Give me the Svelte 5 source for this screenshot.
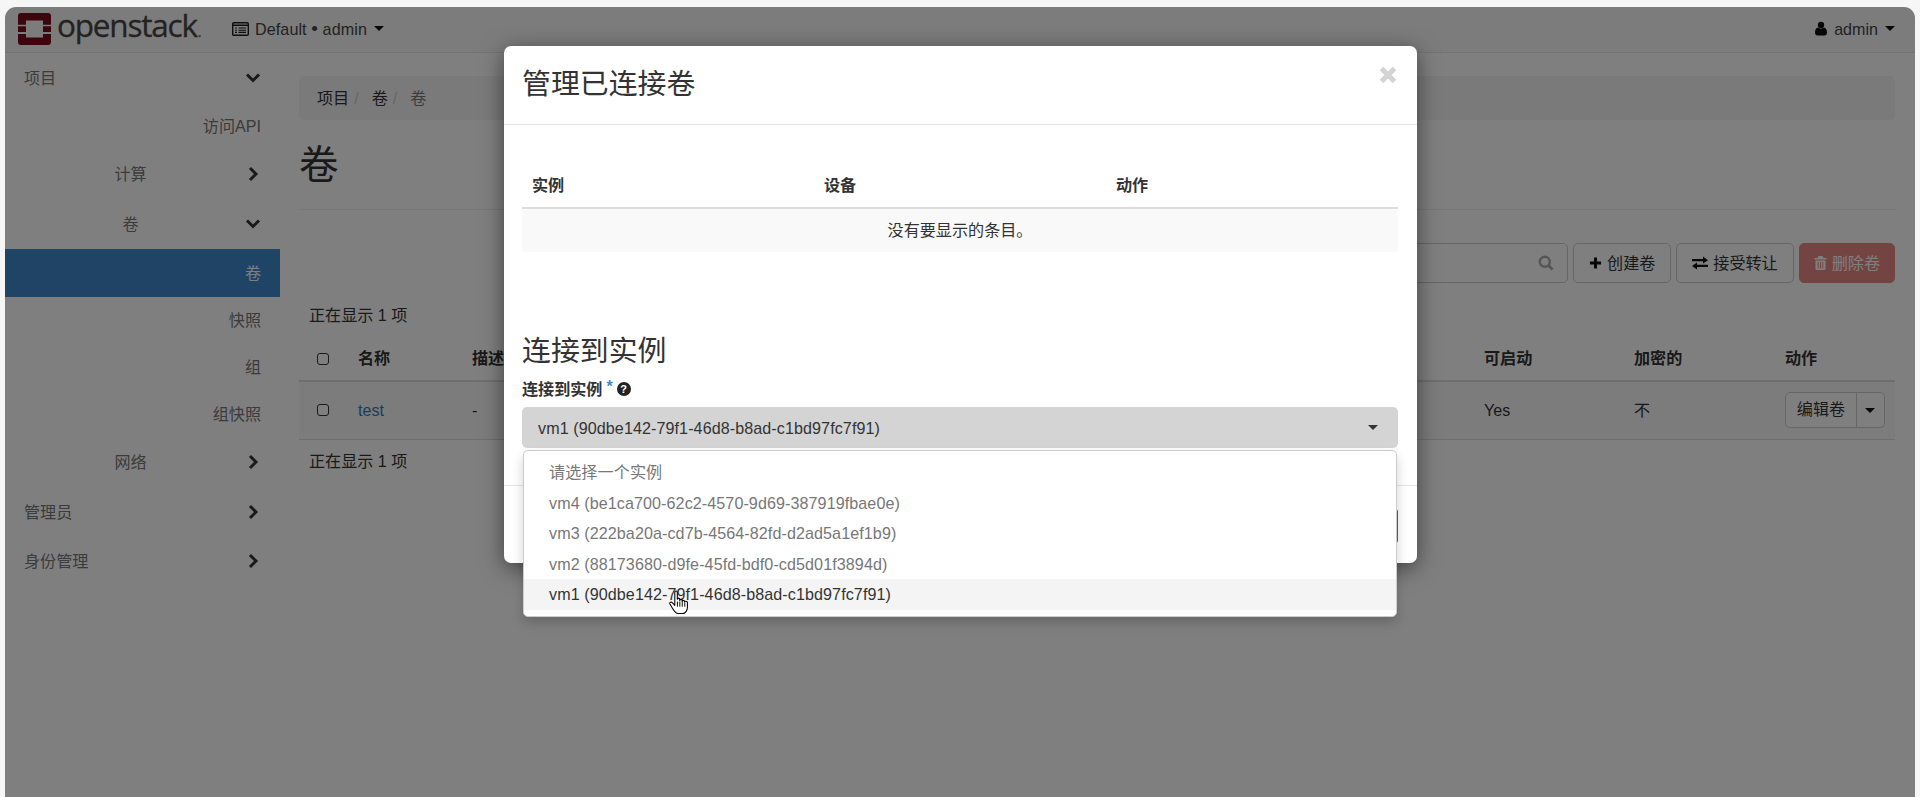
<script>
  const nav = [
    { label: '项目', kind: 'top', align: 'left', chevron: 'down' },
    { label: '访问API', kind: 'sub', align: 'right' },
    { label: '计算', kind: 'top', align: 'center', chevron: 'right' },
    { label: '卷', kind: 'top', align: 'center', chevron: 'down' },
    { label: '卷', kind: 'active', align: 'right' },
    { label: '快照', kind: 'sub', align: 'right' },
    { label: '组', kind: 'sub', align: 'right' },
    { label: '组快照', kind: 'sub', align: 'right' },
    { label: '网络', kind: 'top', align: 'center', chevron: 'right' },
    { label: '管理员', kind: 'top', align: 'left', chevron: 'right' },
    { label: '身份管理', kind: 'top', align: 'left', chevron: 'right' }
  ];
  const heads = ['名称', '描述', '大小', '状态', '组', '类型', '连接到', '可用域', '可启动', '加密的', '动作'];
  const options = [
    '请选择一个实例',
    'vm4 (be1ca700-62c2-4570-9d69-387919fbae0e)',
    'vm3 (222ba20a-cd7b-4564-82fd-d2ad5a1ef1b9)',
    'vm2 (88173680-d9fe-45fd-bdf0-cd5d01f3894d)',
    'vm1 (90dbe142-79f1-46d8-b8ad-c1bd97fc7f91)'
  ];
</script>

<div class="window">
  <header class="navbar">
    <div class="brand">
      <svg class="logo" viewBox="0 0 33 32" aria-hidden="true">
        <path fill="#7a0a1a" d="M3 0h27a3 3 0 0 1 3 3v8.700h-8V7.500H8v4.200H0V3a3 3 0 0 1 3-3zM0 13.300h8V19H0zM25 13.300h8V19h-8zM0 21h8v3.500h17V21h8v8a3 3 0 0 1-3 3H3a3 3 0 0 1-3-3z" />
      </svg>
      <span class="wordmark">openstack<i>.</i></span>
    </div>
    <div class="project">
      <svg class="ico-list" viewBox="0 0 17 14" aria-hidden="true">
        <rect x="0.7" y="0.7" width="15.6" height="12.6" rx="1.2" fill="none" stroke="#1d1d1d" stroke-width="1.4" />
        <path d="M1 3.2h15" stroke="#1d1d1d" stroke-width="1.6" />
        <path d="M3 6h2M3 8.2h2M3 10.4h2M6.500 6h7.500M6.500 8.200h7.500M6.500 10.400h7.500" stroke="#1d1d1d" stroke-width="1.1" />
      </svg>
      <span>Default <b>•</b> admin</span>
      <span class="caret"></span>
    </div>
    <div class="user">
      <svg class="ico-user" viewBox="0 0 12 14" aria-hidden="true">
        <circle cx="6" cy="3.4" r="3.2" fill="#111" />
        <path fill="#111" d="M0 11c0-3 1.2-4.600 3-4.900 1.800 1.200 4.200 1.200 6 0 1.800.3 3 1.900 3 4.900 0 1.900-1 3-2.500 3h-7C1 14 0 12.900 0 11z" />
      </svg>
      <span>admin</span>
      <span class="caret"></span>
    </div>
  </header>

  <div class="main">
    <nav class="sidebar">
      {#each nav as item}
        <div class="item {item.kind}">
          <span class="label {item.align}">{item.label}</span>
          {#if item.chevron === 'down'}
            <svg class="chev" viewBox="0 0 16 12" aria-hidden="true"><path d="M2 2.500l6 6 6-6" fill="none" stroke="#333" stroke-width="3" /></svg>
          {:else if item.chevron === 'right'}
            <svg class="chev" viewBox="0 0 16 16" aria-hidden="true"><path d="M5 2l6 6-6 6" fill="none" stroke="#333" stroke-width="3" /></svg>
          {/if}
        </div>
      {/each}
    </nav>

    <section class="content">
      <ol class="crumbs">
        <li>项目</li><li class="sep">/</li><li>卷</li><li class="sep">/</li><li class="current">卷</li>
      </ol>
      <div class="page-header"><h1>卷</h1></div>

      <div class="toolbar">
        <div class="search">
          <svg viewBox="0 0 16 16" aria-hidden="true"><circle cx="6.800" cy="6.800" r="5" fill="none" stroke="#aaa" stroke-width="2.400" /><path d="M10.500 10.500l4 4" stroke="#aaa" stroke-width="2.800" /></svg>
        </div>
        <div class="btn">
          <svg class="ico" viewBox="0 0 14 14" aria-hidden="true"><path d="M7 1v12M1 7h12" stroke="#111" stroke-width="3.200" /></svg>
          创建卷
        </div>
        <div class="btn">
          <svg class="ico wide" viewBox="0 0 16 14" aria-hidden="true"><path fill="#111" d="M0 3h11V0.500L16 4.200 11 7.500V5.200H0zM16 8.800H5V6.500L0 10l5 3.500v-2.500h11z" /></svg>
          接受转让
        </div>
        <div class="btn danger">
          <svg class="ico" viewBox="0 0 12 14" aria-hidden="true"><path fill="#fff" d="M4 0h4l1 2h3v1.500H0V2h3zM1 4.500h10V13a1 1 0 0 1-1 1H2a1 1 0 0 1-1-1zM3.200 6v6.500h1V6zM5.500 6v6.500h1V6zM7.800 6v6.500h1V6z" /></svg>
          删除卷
        </div>
      </div>

      <p class="count">正在显示 1 项</p>
      <div class="table">
        <div class="row head">
          <div class="cell"><span class="check"></span></div>
          {#each heads as h}<div class="cell">{h}</div>{/each}
        </div>
        <div class="row body">
          <div class="cell"><span class="check"></span></div>
          <div class="cell link">test</div>
          <div class="cell">-</div>
          <div class="cell">1GiB</div>
          <div class="cell">可用</div>
          <div class="cell">-</div>
          <div class="cell">__DEFAULT__</div>
          <div class="cell"></div>
          <div class="cell">nova</div>
          <div class="cell">Yes</div>
          <div class="cell">不</div>
          <div class="cell">
            <div class="split">
              <span class="split-main">编辑卷</span>
              <span class="split-caret"><span class="caret"></span></span>
            </div>
          </div>
        </div>
      </div>
      <p class="count second">正在显示 1 项</p>
    </section>
  </div>

  <div class="backdrop">
    <div class="modal">
      <div class="modal-header">
        <h2>管理已连接卷</h2>
        <svg class="close" viewBox="0 0 16 16" aria-hidden="true"><path d="M2.200 2.200l11.600 11.600M13.800 2.200L2.200 13.800" stroke="#d4d4d4" stroke-width="4.600" /></svg>
      </div>
      <div class="modal-body">
        <div class="attached head">
          <span>实例</span><span>设备</span><span>动作</span>
        </div>
        <div class="empty">没有要显示的条目。</div>
        <h3>连接到实例</h3>
        <div class="field-label">
          连接到实例 <sup>*</sup>
          <span class="help">?</span>
        </div>
        <div class="select">
          <span>vm1 (90dbe142-79f1-46d8-b8ad-c1bd97fc7f91)</span>
          <span class="caret"></span>
        </div>
        <ul class="menu">
          {#each options as opt, i}
            <li class:hover={i === options.length - 1}>{opt}</li>
          {/each}
        </ul>
      </div>
      <div class="modal-footer">
        <span class="btn-cancel">取消</span>
        <span class="btn-primary">连接卷</span>
      </div>
    </div>
  </div>

  <svg class="cursor" viewBox="0 0 19 23" aria-hidden="true">
    <path fill="#fff" stroke="#000" stroke-width="1" stroke-linejoin="round" d="M5.500 1.500c0-1.300 2.400-1.300 2.400 0V8.500c0-1.200 2.300-1.200 2.300 0v1c0-1.200 2.300-1.200 2.300 0v1c0-1.200 2.300-1.200 2.300 0v.5c0-1 2.700-1 2.700.5v4.500c0 3-2 6-4.500 6H8.500c-2.500 0-4-3-5.500-5.500L.9 13c-.8-1.500 1.200-2.700 2.400-1.200l2.200 2.400z" />
    <path d="M8 10.500v5M10.300 10.500v5M12.600 11v4.500M15 11.500v4" stroke="#000" stroke-width="0.900" fill="none" />
  </svg>
</div>

<style>
  :global(body) {
    margin: 0;
    background: #f6f6f6;
    overflow: hidden;
  }
  .window {
    position: relative;
    height: 790px;
    margin: 7px 5px 0;
    overflow: hidden;
    background: #fff;
    border-radius: 11px 11px 0 0;
    color: #333;
    font: 16.1px/22px "Liberation Sans", "Noto Sans CJK SC", sans-serif;
  }
  .navbar {
    display: flex;
    align-items: center;
    height: 45px;
    background: #f8f8f8;
    border-bottom: 1px solid #e7e7e7;
    box-sizing: content-box;
  }
  .brand {
    display: flex;
    align-items: center;
    margin-left: 13px;
    width: 214px;
  }
  .logo {
    width: 33px;
    height: 32px;
    margin-top: -1px;
    flex: none;
  }
  .wordmark {
    margin-left: 6px;
    font: 31.5px/40px "Open Sans", sans-serif;
    letter-spacing: -1.2px;
    color: #484444;
    -webkit-text-stroke: 0.3px #484444;
    margin-top: -3px;
  }
  .wordmark i {
    font-size: 14px;
    font-style: normal;
    color: #777;
    margin-left: 1px;
  }
  .project {
    display: flex;
    align-items: center;
    margin-top: -2px;
    color: #444;
    letter-spacing: 0.1px;
  }
  .project b {
    font-size: 19px;
    font-weight: 400;
    line-height: 1;
  }
  .ico-list {
    width: 17px;
    height: 14px;
    margin-right: 6px;
  }
  .caret {
    display: inline-block;
    width: 0;
    height: 0;
    border-top: 5px solid #111;
    border-left: 5px solid transparent;
    border-right: 5px solid transparent;
    margin-left: 7px;
  }
  .user {
    display: flex;
    align-items: center;
    margin-left: auto;
    margin-top: -2px;
    margin-right: 20px;
    color: #444;
  }
  .ico-user {
    width: 12px;
    height: 15px;
    margin-right: 7px;
  }
  .main {
    display: flex;
  }
  .sidebar {
    width: 275px;
    flex: none;
  }
  .item {
    position: relative;
    display: flex;
    align-items: center;
    padding: 0 19px 0 19px;
    color: #777;
  }
  .item.top {
    height: 49.5px;
  }
  .item.sub {
    height: 47px;
  }
  .item.active {
    height: 48px;
    background: #4088cc;
    color: #fff;
  }
  .label {
    flex: 1;
  }
  .label.left {
    text-align: left;
  }
  .label.center {
    text-align: center;
    padding-right: 8px;
  }
  .label.right {
    text-align: right;
  }
  .chev {
    width: 16px;
    height: 16px;
    flex: none;
  }
  .content {
    flex: 1;
    min-width: 0;
    padding: 23px 20px 0 19px;
  }
  .crumbs {
    display: flex;
    align-items: center;
    gap: 5px;
    height: 44px;
    margin: 0;
    padding: 0 18px;
    list-style: none;
    background: #f5f5f5;
    border-radius: 5px;
  }
  .sep {
    color: #ccc;
    margin-right: 8px;
  }
  .current {
    color: #777;
  }
  .page-header {
    height: 89px;
    border-bottom: 1px solid #eee;
  }
  h1 {
    margin: 0;
    padding-top: 23px;
    font-size: 39.6px;
    line-height: 44px;
    font-weight: 400;
  }
  .toolbar {
    display: flex;
    justify-content: flex-end;
    gap: 5px;
    margin-top: 33px;
    height: 40px;
  }
  .search {
    display: flex;
    align-items: center;
    justify-content: flex-end;
    box-sizing: border-box;
    width: 300px;
    padding-right: 13px;
    background: #fff;
    border: 1px solid #ccc;
    border-radius: 5px;
  }
  .search svg {
    width: 16px;
    height: 16px;
  }
  .btn {
    display: flex;
    align-items: center;
    gap: 5px;
    box-sizing: border-box;
    padding: 0 15px;
    background: #fff;
    border: 1px solid #ccc;
    border-radius: 5px;
  }
  .ico {
    width: 13px;
    height: 14px;
  }
  .ico.wide {
    width: 16px;
  }
  .btn.danger {
    padding: 0 14px;
    background: #e88886;
    border-color: #e88886;
    color: #fff;
  }
  .count {
    margin: 21px 0 0 10px;
  }
  .count.second {
    margin-top: 10px;
  }
  .row {
    display: grid;
    grid-template-columns: 49px 114px repeat(7, 1fr) 150px 151px 120px;
  }
  .cell {
    padding: 0 10px;
    min-width: 0;
    white-space: nowrap;
  }
  .row.head {
    align-items: end;
    height: 56px;
    padding-bottom: 11px;
    box-sizing: border-box;
    border-bottom: 2px solid #ddd;
    font-weight: 700;
  }
  .row.body {
    align-items: center;
    height: 57px;
    background: #f9f9f9;
    border-bottom: 1px solid #ddd;
    box-sizing: content-box;
  }
  .row.body .cell {
    padding-bottom: 2px;
  }
  .check {
    display: block;
    width: 10px;
    height: 10px;
    margin: 0 0 0 8px;
    border: 1.500px solid #333;
    border-radius: 3px;
    background: #fff;
  }
  .row.head .check {
    margin-bottom: 4px;
  }
  .link {
    color: #337ab7;
  }
  .split {
    display: flex;
    width: 100px;
    height: 36px;
    box-sizing: border-box;
    background: #fff;
    border: 1px solid #ccc;
    border-radius: 5px;
    margin-left: 0;
    align-items: center;
  }
  .cell:last-child {
    padding-right: 0;
  }
  .split-main {
    width: 70px;
    text-align: center;
    border-right: 1px solid #ccc;
    height: 100%;
    line-height: 33px;
  }
  .split-caret {
    flex: 1;
    text-align: center;
  }
  .split-caret .caret {
    margin: 0 0 3px;
  }
  .backdrop {
    position: absolute;
    inset: 0;
    background: rgba(0, 0, 0, 0.5);
  }
  .modal {
    position: relative;
    width: 913px;
    margin: 39px 0 0 499px;
    background: #fff;
    border-radius: 7px;
    box-shadow: 0 5px 22px rgba(0, 0, 0, 0.5);
  }
  .modal-header {
    display: flex;
    justify-content: space-between;
    height: 78px;
    box-sizing: content-box;
    padding: 0 19px 0 18px;
    border-bottom: 1px solid #e5e5e5;
  }
  h2 {
    margin: 0;
    padding-top: 18px;
    font-size: 28.9px;
    line-height: 40px;
    font-weight: 400;
  }
  .close {
    width: 18px;
    height: 18px;
    margin: 20px 1px 0 0;
  }
  .modal-body {
    position: relative;
    padding: 0 19px 37px 18px;
  }
  .attached.head {
    display: grid;
    grid-template-columns: 292px 292px 1fr;
    align-items: end;
    height: 84px;
    box-sizing: border-box;
    padding: 0 0 11px 10px;
    border-bottom: 2px solid #ddd;
    font-weight: 700;
  }
  .empty {
    height: 43px;
    line-height: 43px;
    text-align: center;
    background: #f9f9f9;
  }
  h3 {
    margin: 79px 0 0;
    font-size: 28.9px;
    line-height: 40px;
    font-weight: 400;
  }
  .field-label {
    display: flex;
    align-items: center;
    gap: 4px;
    margin-top: 7px;
    font-weight: 700;
  }
  sup {
    color: #428bca;
    font-size: 16px;
    line-height: 1;
    vertical-align: top;
    margin-top: -5px;
  }
  .help {
    display: inline-block;
    width: 14px;
    height: 14px;
    border-radius: 50%;
    background: #222;
    color: #fff;
    font-size: 11px;
    line-height: 14px;
    text-align: center;
  }
  .select {
    display: flex;
    align-items: center;
    justify-content: space-between;
    height: 41px;
    margin-top: 7px;
    padding: 0 20px 0 16px;
    background: #d4d4d4;
    border-radius: 5px;
    letter-spacing: 0.09px;
  }
  .select .caret {
    border-top-color: #333;
  }
  .menu {
    position: absolute;
    left: 19px;
    right: 20px;
    top: 325px;
    margin: 0;
    padding: 6px 0 6px;
    list-style: none;
    background: #fff;
    border: 1px solid #ccc;
    border-radius: 5px;
    box-shadow: 0 6px 12px rgba(0, 0, 0, 0.18);
    z-index: 2;
    letter-spacing: 0.09px;
  }
  .menu li {
    height: 30.5px;
    line-height: 30.5px;
    padding-left: 25px;
    color: #777;
  }
  .menu li.hover {
    background: #f4f4f4;
    color: #333;
  }
  .modal-footer {
    display: flex;
    justify-content: flex-end;
    gap: 5px;
    height: 78px;
    box-sizing: border-box;
    padding: 21px 19px 0;
    border-top: 1px solid #e5e5e5;
  }
  .btn-cancel,
  .btn-primary {
    height: 36px;
    line-height: 34px;
    padding: 0 16px;
    border-radius: 5px;
    border: 1px solid #ccc;
  }
  .btn-primary {
    background: #337ab7;
    border-color: #2e6da4;
    color: #fff;
  }
  .cursor {
    position: absolute;
    z-index: 3;
    left: 664px;
    top: 583px;
    width: 20px;
    height: 25px;
  }
</style>
